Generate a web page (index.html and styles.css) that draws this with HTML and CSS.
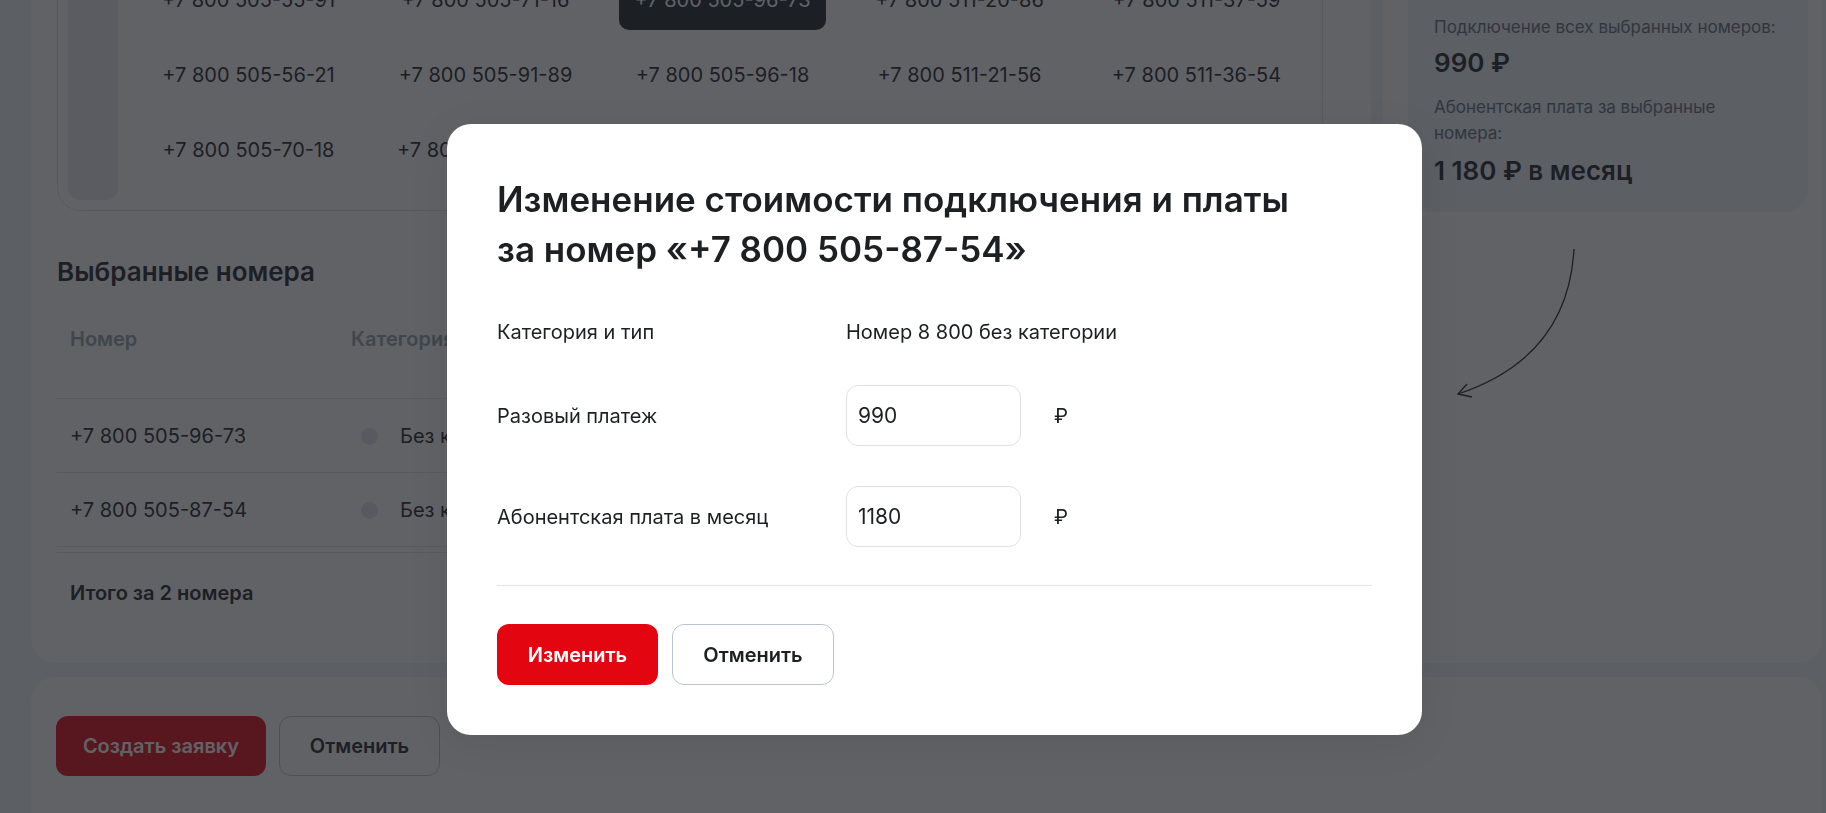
FILE: index.html
```html
<!DOCTYPE html>
<html lang="ru">

<head>
    <meta charset="UTF-8">
    <meta name="viewport" content="width=device-width, initial-scale=1.0">
    <title>Выбор номеров</title>
    <link rel="stylesheet" href="styles.css">
</head>

<body>
    <div class="page">
        <div class="columns">
            <section class="card main-card">
                <div class="numbers-box">
                    <div class="letters"></div>
                    <div class="numbers">
                        <span class="num">+7 800 505-55-91</span>
                        <span class="num">+7 800 505-71-16</span>
                        <span class="num selected">+7 800 505-96-73</span>
                        <span class="num">+7 800 511-20-86</span>
                        <span class="num">+7 800 511-37-59</span>

                        <span class="num">+7 800 505-56-21</span>
                        <span class="num">+7 800 505-91-89</span>
                        <span class="num">+7 800 505-96-18</span>
                        <span class="num">+7 800 511-21-56</span>
                        <span class="num">+7 800 511-36-54</span>

                        <span class="num">+7 800 505-70-18</span>
                        <span class="num">+7 800 505-87-54</span>
                        <span class="num">+7 800 505-99-02</span>
                        <span class="num">+7 800 511-24-17</span>
                        <span class="num">+7 800 511-40-63</span>
                    </div>
                </div>

                <h2 class="section-title">Выбранные номера</h2>

                <table class="picked">
                    <tr>
                        <th class="col-num">Номер</th>
                        <th class="col-cat">Категория</th>
                        <th>Разовый платеж</th>
                        <th>Абонентская плата</th>
                    </tr>
                    <tr>
                        <td>+7 800 505-96-73</td>
                        <td><span class="dot"></span>Без категории</td>
                        <td>990 ₽</td>
                        <td>590 ₽</td>
                    </tr>
                    <tr>
                        <td>+7 800 505-87-54</td>
                        <td><span class="dot"></span>Без категории</td>
                        <td>0 ₽</td>
                        <td>590 ₽</td>
                    </tr>
                </table>

                <div class="total">Итого за 2 номера</div>
            </section>

            <aside class="card side-card">
                <div class="summary">
                    <p class="summary-label">Подключение всех выбранных номеров:</p>
                    <p class="summary-value">990 ₽</p>
                    <p class="summary-label summary-label-wide">Абонентская плата за выбранные номера:</p>
                    <p class="summary-value">1&nbsp;180 ₽ в месяц</p>
                </div>
                <svg class="arrow" width="140" height="160" viewBox="0 0 140 160">
                    <path d="M124 7 C120 80 80 128 8 152" fill="none" stroke="#1d2023" stroke-width="1.3" />
                    <path d="M17 142 L8 152 L22 155" fill="none" stroke="#1d2023" stroke-width="1.3" />
                </svg>
            </aside>
        </div>

        <section class="card actions-card">
            <button class="btn btn-red">Создать заявку</button>
            <button class="btn btn-outline">Отменить</button>
        </section>
    </div>

    <div class="overlay">
        <div class="modal">
            <h1 class="modal-title">Изменение стоимости подключения и платы<br>за номер «+7 800 505-87-54»</h1>

            <div class="modal-rows">
                <span class="modal-label">Категория и тип</span>
                <span class="modal-value">Номер 8 800 без категории</span>

                <span class="modal-label">Разовый платеж</span>
                <input type="text" class="price-input" value="990">
                <span class="rub">₽</span>

                <span class="modal-label">Абонентская плата в месяц</span>
                <input type="text" class="price-input" value="1180">
                <span class="rub">₽</span>
            </div>

            <hr class="modal-line">

            <div class="modal-buttons">
                <button class="btn btn-red">Изменить</button>
                <button class="btn btn-outline">Отменить</button>
            </div>
        </div>
    </div>
</body>

</html>
```

FILE: styles.css
```css
* {
    box-sizing: border-box;
}

body {
    margin: 0;
    font-family: Inter, "Noto Sans", sans-serif;
    color: #1d2023;
    background-color: #f2f3f7;
    overflow: hidden;
}

.page {
    margin-top: -87px;
    padding: 0 4px 0 31px;
}

.columns {
    display: flex;
    gap: 12px;
}

.card {
    background-color: #fff;
    border-radius: 24px;
}

.main-card {
    width: 1340px;
    padding: 26px 26px 31px;
}

.side-card {
    flex: 1;
    padding: 25px 14px 25px 25px;
}

/* number picker */

.numbers-box {
    display: flex;
    margin-right: 22px;
    padding: 10px;
    border: 1px solid #dfe2e8;
    border-radius: 24px;
}

.letters {
    width: 50px;
    background-color: #e9ebef;
    border-radius: 12px;
}

.numbers {
    display: grid;
    grid-template-columns: repeat(5, 207px);
    grid-auto-rows: 60px;
    column-gap: 30px;
    row-gap: 15px;
    margin-left: 27px;
    padding: 20px 0;
}

.num {
    display: flex;
    align-items: center;
    justify-content: center;
    font-size: 20px;
    border-radius: 10px;
}

.num.selected {
    background-color: #1d2023;
    color: #fff;
}

/* picked numbers */

.section-title {
    margin: 45px 0 0;
    font-size: 26px;
    line-height: 32px;
    font-weight: 600;
}

.picked {
    width: 100%;
    margin-top: 24px;
    border-collapse: collapse;
    table-layout: fixed;
    font-size: 20px;
}

.picked th {
    padding: 15px 13px 47px;
    line-height: 24px;
    text-align: left;
    font-weight: 600;
    color: #969fa8;
}

.picked .col-num {
    width: 281px;
}

.picked .col-cat {
    width: 330px;
}

.picked tr {
    border-bottom: 1px solid #e2e5eb;
}

.picked td {
    height: 74px;
    padding: 0 13px;
    line-height: 24px;
}

.dot {
    display: inline-block;
    width: 17px;
    height: 17px;
    margin: 0 22px 0 10px;
    vertical-align: -2px;
    border-radius: 50%;
    background-color: #e2e5eb;
}

.total {
    margin-top: 5px;
    padding: 28px 13px 27px;
    border-top: 1px solid #e2e5eb;
    font-size: 20px;
    line-height: 24px;
    font-weight: 600;
}

/* summary */

.summary {
    width: 400px;
    padding: 77px 20px 24px 26px;
    background-color: #f2f3f7;
    border-radius: 24px;
}

.summary p {
    margin: 0;
}

.summary-label {
    font-size: 17px;
    line-height: 24px;
    color: #626c77;
}

.summary-label-wide {
    width: 300px;
    margin-top: 14px !important;
    line-height: 26px;
}

.summary-value {
    margin-top: 7px !important;
    font-size: 26px;
    line-height: 34px;
    font-weight: 600;
}

.summary-label-wide + .summary-value {
    margin-top: 8px !important;
}

.arrow {
    display: block;
    margin: 30px 0 0 42px;
}

/* bottom actions */

.actions-card {
    display: flex;
    gap: 13px;
    width: 1791px;
    height: 200px;
    margin-top: 14px;
    padding: 39px 25px;
}

.btn {
    height: 60px;
    padding: 0 24px;
    font-family: inherit;
    font-size: 20px;
    font-weight: 600;
    border-radius: 12px;
    cursor: pointer;
}

.btn-red {
    background-color: #e30611;
    border: none;
    color: #fff;
}

.btn-outline {
    background-color: #fff;
    border: 1px solid #bcc3d0;
    color: #1d2023;
}

.actions-card .btn-red {
    width: 210px;
}

.actions-card .btn-outline {
    width: 161px;
}

/* modal */

.overlay {
    position: fixed;
    inset: 0;
    padding: 124px 0 0 447px;
    background-color: rgba(29, 32, 37, 0.7);
}

.modal {
    width: 975px;
    padding: 50px;
    background-color: #fff;
    border-radius: 24px;
    box-shadow: 0 8px 40px rgba(0, 0, 0, 0.08);
}

.modal-title {
    margin: 0;
    font-size: 35px;
    line-height: 50px;
    font-weight: 600;
}

.modal-rows {
    display: grid;
    grid-template-columns: 316px 175px auto;
    column-gap: 33px;
    row-gap: 40px;
    align-items: center;
    margin-top: 45px;
    font-size: 20px;
    line-height: 26px;
}

.modal-value {
    grid-column: span 2;
}

.price-input {
    width: 175px;
    height: 61px;
    padding: 0 11px;
    font-family: inherit;
    font-size: 21px;
    color: #1d2023;
    border: 1px solid #dfe1e8;
    border-radius: 12px;
    outline: none;
}

.modal-line {
    margin: 38px 0 0;
    border: none;
    border-top: 1px solid #e2e5eb;
}

.modal-buttons {
    display: flex;
    gap: 14px;
    margin-top: 38px;
}

.modal-buttons .btn {
    height: 61px;
    width: 161px;
    padding: 0;
}

.modal-buttons .btn-outline {
    width: 162px;
}
```
